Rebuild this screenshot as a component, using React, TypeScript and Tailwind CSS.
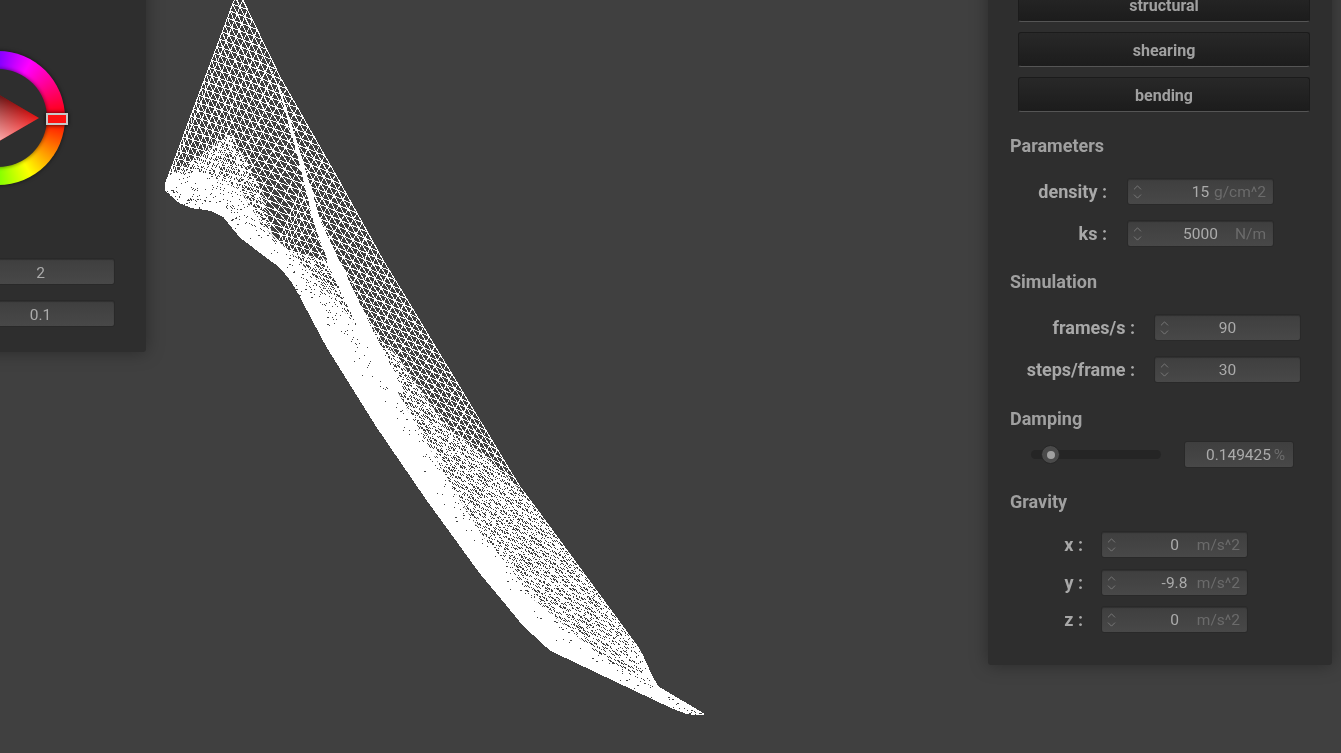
import { ChevronDown, ChevronUp } from 'lucide-react'

const font = "font-['Roboto','Liberation_Sans',sans-serif]"

/* ---------- cloth mesh ---------- */

type Pt = [number, number]

// right edge of the cloth, top to tip
const RIGHT: Pt[] = [
  [238, -10],
  [280, 77],
  [337, 177],
  [383, 260],
  [397, 283],
  [520, 487],
  [530, 500],
  [640, 650],
  [647, 665],
  [655, 685],
  [704, 714],
]

// lower edge, each point tagged with the distance along RIGHT it pairs with
const LEFT: [number, number, number][] = [
  [0, 165, 185],
  [14, 166, 191],
  [40, 180, 203],
  [70, 193, 208],
  [95, 210, 210],
  [120, 223, 216],
  [150, 240, 237],
  [175, 270, 260],
  [205, 280, 267],
  [235, 293, 283],
  [290, 327, 347],
  [395, 377, 427],
  [480, 427, 500],
  [570, 480, 573],
  [610, 500, 597],
  [650, 523, 625],
  [685, 550, 650],
  [750, 613, 680],
  [800, 670, 707],
  [835, 688, 714],
  [870, 704, 714],
]

// where the cloth bunches up into a solid strip
const SOLID_EDGE: Pt[] = [
  [165, 186], [190, 198], [215, 198], [245, 222], [285, 252], [313, 293], [360, 360], [413, 427],
  [450, 500], [510, 567], [533, 600], [570, 633], [617, 667], [653, 687], [690, 710], [704, 714],
]

// folded part and the lower cloth: smaller cells
const MID_ZONE: Pt[] = [
  [150, 180], [167, 177], [200, 155], [232, 133], [262, 190], [275, 247], [335, 262], [365, 320],
  [400, 360], [445, 425], [490, 460], [530, 500], [640, 650], [655, 685], [704, 714], [704, 730],
  [500, 730], [150, 300],
]

// next to the solid strip: nearly closed lattice
const DENSE_ZONE: Pt[] = [
  [150, 178], [165, 176], [200, 172], [240, 190], [262, 225], [300, 262], [335, 300], [375, 350],
  [413, 420], [460, 500], [513, 583], [550, 613], [613, 667], [655, 688], [704, 714], [704, 730],
  [500, 730], [150, 300],
]

// crease running parallel to the right edge
const RIDGE: Pt[] = [
  [268, 60], [284, 100], [302, 158], [321, 222], [343, 268], [375, 335], [404, 392],
  [396, 392], [361, 335], [331, 270], [314, 224], [298, 158], [282, 100],
]

const lengths = RIGHT.map(() => 0)
for (let i = 1; i < RIGHT.length; i++) {
  lengths[i] = lengths[i - 1] + Math.hypot(RIGHT[i][0] - RIGHT[i - 1][0], RIGHT[i][1] - RIGHT[i - 1][1])
}
const total = lengths[lengths.length - 1]

function rightAt(s: number): Pt {
  for (let i = 1; i < RIGHT.length; i++) {
    if (s <= lengths[i]) {
      const k = (s - lengths[i - 1]) / (lengths[i] - lengths[i - 1])
      return [RIGHT[i - 1][0] + (RIGHT[i][0] - RIGHT[i - 1][0]) * k, RIGHT[i - 1][1] + (RIGHT[i][1] - RIGHT[i - 1][1]) * k]
    }
  }
  return RIGHT[RIGHT.length - 1]
}

function leftAt(s: number): Pt {
  const scaled = (s / total) * 870
  for (let i = 1; i < LEFT.length; i++) {
    if (scaled <= LEFT[i][0]) {
      const k = (scaled - LEFT[i - 1][0]) / (LEFT[i][0] - LEFT[i - 1][0])
      return [LEFT[i - 1][1] + (LEFT[i][1] - LEFT[i - 1][1]) * k, LEFT[i - 1][2] + (LEFT[i][2] - LEFT[i - 1][2]) * k]
    }
  }
  return [704, 714]
}

// d = distance in from the right edge, squeezed further down the cloth
function meshPoint(s: number, d: number): string {
  const r = rightAt(s)
  const l = leftAt(s)
  const width = Math.max(Math.hypot(l[0] - r[0], l[1] - r[1]), 1)
  const v = Math.min((d * (1 - (0.4 * s) / total)) / width, 1)
  return `${(r[0] + (l[0] - r[0]) * v).toFixed(1)} ${(r[1] + (l[1] - r[1]) * v).toFixed(1)}`
}

function buildMesh(along: number, across: number) {
  const rows = Math.ceil(total / along)
  const cols = Math.ceil(215 / across)
  const parts: string[] = []
  for (let i = 0; i <= rows; i++) {
    const line: string[] = []
    for (let j = 0; j <= cols; j++) line.push(meshPoint(i * along, j * across))
    parts.push('M' + line.join('L'))
  }
  for (let j = 0; j <= cols; j++) {
    const line: string[] = []
    for (let i = 0; i <= rows; i++) line.push(meshPoint(i * along, j * across))
    parts.push('M' + line.join('L'))
    if (j < cols) {
      for (let i = 0; i < rows; i++) {
        parts.push(`M${meshPoint(i * along, (j + 1) * across)}L${meshPoint((i + 1) * along, j * across)}`)
      }
    }
  }
  return parts.join('')
}

function toPath(points: Pt[]) {
  return 'M' + points.map((p) => `${p[0]} ${p[1]}`).join('L') + 'Z'
}

const solidPoints: Pt[] = SOLID_EDGE.concat(
  LEFT.slice()
    .reverse()
    .map((p): Pt => [p[1], p[2]]),
)

// small gaps left in the solid strip
function buildSpecks() {
  let seed = 41
  const rand = () => {
    seed = (seed * 16807) % 2147483647
    return seed / 2147483647
  }
  const specks: Pt[] = []
  for (let i = 0; i < 190; i++) {
    const at = rand() * (SOLID_EDGE.length - 1.01)
    const a = SOLID_EDGE[Math.floor(at)]
    const b = SOLID_EDGE[Math.floor(at) + 1]
    const k = at - Math.floor(at)
    const reach = rand() * rand() * 26
    specks.push([Math.round(a[0] + (b[0] - a[0]) * k - reach * 0.6), Math.round(a[1] + (b[1] - a[1]) * k + reach * 0.45)])
  }
  return specks
}

const openMesh = buildMesh(11, 7.5)
const midMesh = buildMesh(8, 5)
const denseMesh = buildMesh(4.6, 2.7)
const specks = buildSpecks()

function ClothMesh() {
  return (
    <svg className="absolute left-0 top-0 h-[753px] w-[1341px]" viewBox="0 0 1341 753" shapeRendering="crispEdges">
      <defs>
        <clipPath id="mid-zone">
          <path d={toPath(MID_ZONE)} />
        </clipPath>
        <clipPath id="dense-zone">
          <path d={toPath(DENSE_ZONE)} />
        </clipPath>
      </defs>
      <path d={openMesh} fill="none" stroke="#ffffff" strokeWidth="1" />
      <path d={midMesh} fill="none" stroke="#ffffff" strokeWidth="1" clipPath="url(#mid-zone)" />
      <path d={denseMesh} fill="none" stroke="#ffffff" strokeWidth="1" clipPath="url(#dense-zone)" />
      <path d={toPath(RIDGE)} fill="#ffffff" />
      <path d={toPath(solidPoints)} fill="#ffffff" />
      {specks.map((p, i) => (
        <rect key={i} x={p[0]} y={p[1]} width={i % 4 === 0 ? 2 : 1} height={1} fill="#404040" />
      ))}
    </svg>
  )
}

/* ---------- widgets ---------- */

function Spinner() {
  return (
    <div className="absolute left-[2px] top-[-2px] flex h-[29px] w-[15px] flex-col items-center justify-center text-[#8c8c8c]">
      <ChevronUp size={13} strokeWidth={1.3} className="-mb-[2px]" />
      <ChevronDown size={13} strokeWidth={1.3} className="-mt-[2px]" />
    </div>
  )
}

function NumberBox({
  value,
  unit,
  spin = true,
  className = 'w-[147px] pt-[2px]',
}: {
  value: string
  unit?: string
  spin?: boolean
  className?: string
}) {
  return (
    <div
      className={`relative flex h-[27px] items-center justify-center rounded-[3px] border border-[#292929] bg-gradient-to-b from-[#3f3f3f] to-[#484848] text-[15.5px] text-[#ababab] shadow-[inset_0_1px_1px_rgba(0,0,0,0.25)] ${className}`}
    >
      {spin && <Spinner />}
      <span>{value}</span>
      {unit && <span className="absolute right-[7px] text-[#6b6b6b]">{unit}</span>}
    </div>
  )
}

function ToggleButton({ label }: { label: string }) {
  return (
    <button
      type="button"
      className="mb-[10px] ml-[30px] h-[35px] w-[292px] rounded-[3px] border border-[#1b1b1b] border-b-[#555555] bg-gradient-to-b from-[#282828] to-[#1c1c1c] pt-[2px] text-[16px] font-bold text-[#a0a0a0]"
    >
      {label}
    </button>
  )
}

function SectionTitle({ children, className = '' }: { children: string; className?: string }) {
  return <div className={`h-[24px] pl-[22px] text-[18px] font-bold leading-[24px] text-[#a0a0a0] ${className}`}>{children}</div>
}

function FieldRow({
  label,
  value,
  unit,
  labelWidth,
  gap,
  className = '',
}: {
  label: string
  value: string
  unit?: string
  labelWidth: string
  gap: string
  className?: string
}) {
  return (
    <div className={`flex items-center ${gap} ${className}`}>
      <div className={`text-right text-[18px] font-bold text-[#a8a8a8] ${labelWidth}`}>{label}</div>
      <NumberBox value={value} unit={unit} />
    </div>
  )
}

function ColorWheel() {
  return (
    <div className="relative ml-[131px] mt-[71px] h-[134px] w-[134px] shrink-0 rounded-full bg-[conic-gradient(from_90deg,#ff0000,#ffff00,#00ff00,#00ffff,#0000ff,#ff00ff,#ff0000)] shadow-[0_0_4px_rgba(0,0,0,0.6)]">
      <div className="absolute inset-[18px] rounded-full bg-[#2e2e2e] shadow-[0_0_4px_rgba(0,0,0,0.6)]" />
      <svg className="absolute left-0 top-0" width="134" height="134" viewBox="0 0 134 134">
        <defs>
          <linearGradient id="shade-black" gradientUnits="userSpaceOnUse" x1="46" y1="31" x2="80" y2="90">
            <stop offset="0" stopColor="#000000" />
            <stop offset="1" stopColor="#000000" stopOpacity="0" />
          </linearGradient>
          <linearGradient id="shade-white" gradientUnits="userSpaceOnUse" x1="46" y1="103" x2="80" y2="44">
            <stop offset="0" stopColor="#ffffff" />
            <stop offset="1" stopColor="#ffffff" stopOpacity="0" />
          </linearGradient>
        </defs>
        <polygon points="108,67 46,31 46,103" fill="#ff0000" />
        <polygon points="108,67 46,31 46,103" fill="url(#shade-black)" />
        <polygon points="108,67 46,31 46,103" fill="url(#shade-white)" />
      </svg>
      {/* hue marker */}
      <div className="absolute left-[115px] top-[62px] h-[12px] w-[22px] border-2 border-[#c8c8c8] bg-[#ff1010] shadow-[0_0_4px_rgba(0,0,0,0.8)]" />
    </div>
  )
}

export default function App() {
  return (
    <div className={`relative h-[753px] w-[1341px] overflow-hidden bg-[#404040] ${font}`}>
      <ClothMesh />

      {/* left window, mostly off screen */}
      <div className="absolute left-[-200px] top-[-20px] flex w-[346px] flex-col rounded-[3px] bg-[#2e2e2e] pb-[25px] shadow-[0_0_18px_rgba(0,0,0,0.35)] blur-[0.4px]">
        <ColorWheel />
        <div className="mt-[73px] flex flex-col items-end gap-[15px] pr-[31px]">
          <NumberBox value="2" spin={false} className="w-[149px] pt-[4px]" />
          <NumberBox value="0.1" spin={false} className="w-[149px] pt-[4px]" />
        </div>
      </div>

      {/* right window, top cut off by the viewport */}
      <div className="absolute left-[988px] top-[-20px] flex w-[344px] flex-col rounded-[3px] bg-[#2e2e2e] pb-[32px] pt-[7px] shadow-[0_0_18px_rgba(0,0,0,0.35)] blur-[0.4px]">
        <ToggleButton label="structural" />
        <ToggleButton label="shearing" />
        <ToggleButton label="bending" />

        <SectionTitle className="mt-[12px]">Parameters</SectionTitle>
        <FieldRow className="mt-[20px]" label="density :" value="15" unit="g/cm^2" labelWidth="w-[119px]" gap="gap-[20px]" />
        <FieldRow className="mt-[15px]" label="ks :" value="5000" unit="N/m" labelWidth="w-[119px]" gap="gap-[20px]" />

        <SectionTitle className="mt-[23px]">Simulation</SectionTitle>
        <FieldRow className="mt-[20px]" label="frames/s :" value="90" labelWidth="w-[147px]" gap="gap-[19px]" />
        <FieldRow className="mt-[15px]" label="steps/frame :" value="30" labelWidth="w-[147px]" gap="gap-[19px]" />

        <SectionTitle className="mt-[24px]">Damping</SectionTitle>
        <div className="mt-[10px] flex items-center gap-[23px] pl-[43px]">
          <div className="relative h-[9px] w-[130px] rounded-full bg-[#252525]">
            <div className="absolute left-[10px] top-[-5px] flex h-[19px] w-[19px] items-center justify-center rounded-full border border-[#262626] bg-[#4a4a4a]">
              <div className="h-[8px] w-[8px] rounded-full bg-[#a0a0a0]" />
            </div>
          </div>
          <div className="relative flex h-[27px] w-[110px] items-center justify-end rounded-[3px] border border-[#292929] bg-gradient-to-b from-[#3f3f3f] to-[#484848] pr-[22px] pt-[2px] text-[15.5px] text-[#ababab]">
            <span>0.149425</span>
            <span className="absolute right-[8px] text-[#6b6b6b]">%</span>
          </div>
        </div>

        <SectionTitle className="mt-[22px]">Gravity</SectionTitle>
        <FieldRow className="mt-[17px]" label="x :" value="0" unit="m/s^2" labelWidth="w-[95px]" gap="gap-[18px]" />
        <FieldRow className="mt-[11px]" label="y :" value="-9.8" unit="m/s^2" labelWidth="w-[95px]" gap="gap-[18px]" />
        <FieldRow className="mt-[10px]" label="z :" value="0" unit="m/s^2" labelWidth="w-[95px]" gap="gap-[18px]" />
      </div>
    </div>
  )
}
